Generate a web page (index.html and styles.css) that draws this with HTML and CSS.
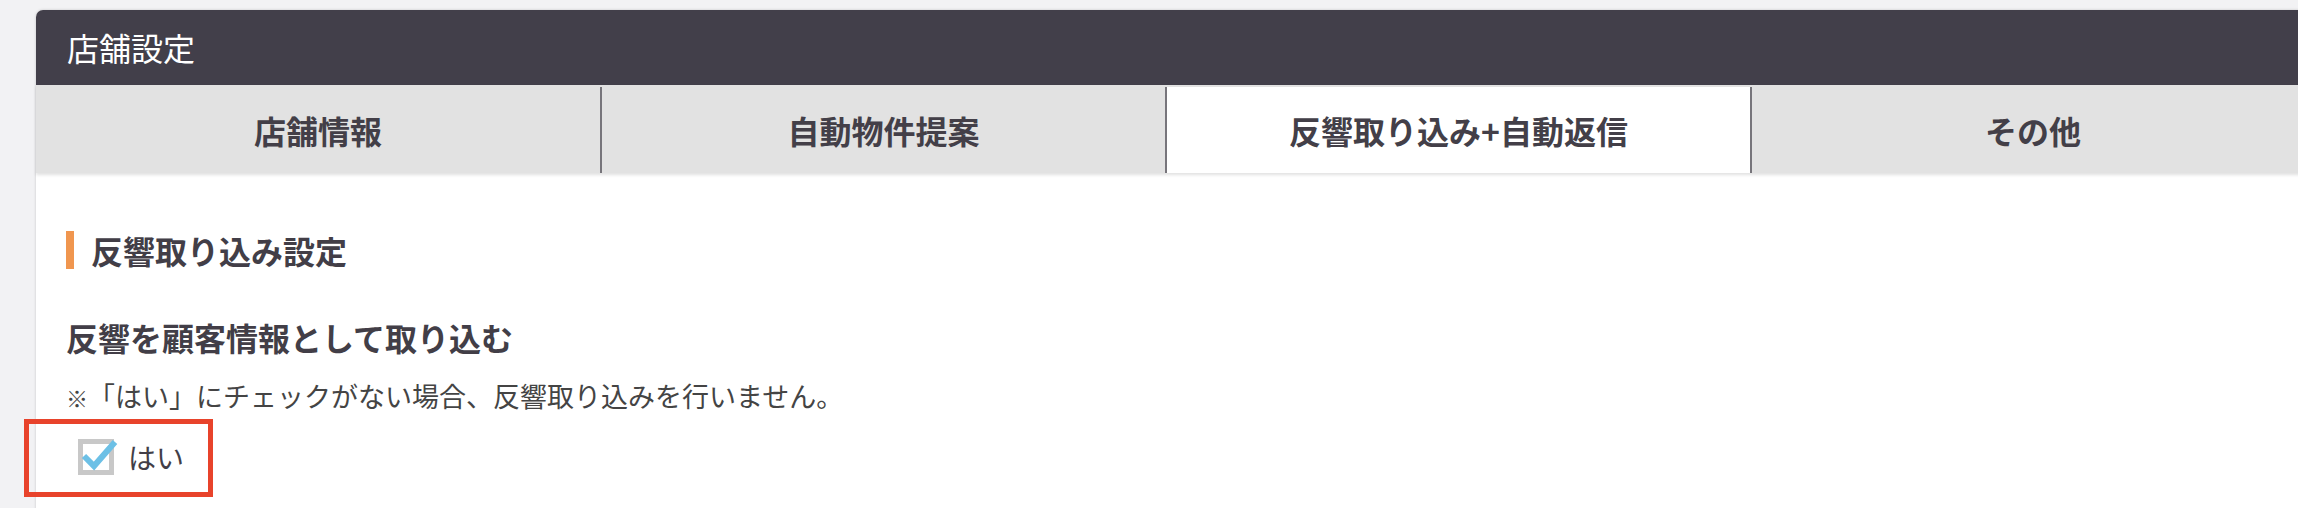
FILE: index.html
```html
<!DOCTYPE html>
<html lang="ja">
<head>
	<meta charset="UTF-8">
	<title>店舗設定</title>
	<link rel="stylesheet" href="styles.css">
</head>
<body>

<div class="panel">
	<div class="panel-title">店舗設定</div>
	<div class="tabs">
		<div class="tab">店舗情報</div>
		<div class="tab">自動物件提案</div>
		<div class="tab active">反響取り込み+自動返信</div>
		<div class="tab">その他</div>
	</div>
	<div class="panel-body">
		<h2 class="section-title">反響取り込み設定</h2>
		<div class="field-label">反響を顧客情報として取り込む</div>
		<p class="note"><span class="mark">※</span>「はい」にチェックがない場合、反響取り込みを行いません。</p>
		<label class="check">
			<svg class="check-box" width="40" height="36" viewBox="0 0 40 36">
				<rect x="2.5" y="2.5" width="31" height="31" fill="#fff" stroke="#c8c8c8" stroke-width="5" />
				<polyline points="6,17 16,27 37,3" fill="none" stroke="#6cc0e6" stroke-width="6" />
			</svg>
			<span>はい</span>
		</label>
	</div>
</div>

<!-- annotation frame drawn over the screenshot -->
<div class="highlight"></div>

</body>
</html>
```

FILE: styles.css
```css
body {
	margin: 0;
	background-color: #f2f2f4;
	font-family: "Noto Sans CJK JP", "Noto Sans", sans-serif;
	color: #423e47;
	overflow: hidden;
	position: relative;
	height: 508px;
}

.panel {
	width: 2278px;
	margin: 10px 0 0 36px;
	background-color: #fff;
	border-radius: 7px 7px 0 0;
	box-shadow: 0 0 3px rgba(0,0,0,.18);
	height: 600px;
}

.panel-title {
	height: 75px;
	line-height: 75px;
	padding-left: 31px;
	background-color: #423f4a;
	color: #fff;
	font-size: 32px;
	border-radius: 7px 7px 0 0;
}

.tabs {
	display: grid;
	grid-template-columns: 564px 565px 585px 1fr;
	padding-top: 2px;
	background-color: #e2e2e2;
	box-shadow: 0 2px 3px rgba(0,0,0,.12);
	position: relative;
}
.tab {
	height: 86px;
	line-height: 86px;
	text-align: center;
	font-size: 32px;
	font-weight: bold;
	color: #433f48;
	background-color: #e2e2e2;
}
.tab + .tab {
	border-left: 2px solid #77757b;
}
.tab.active {
	background-color: #fff;
}

.panel-body {
	padding: 58px 30px 0;
}

.section-title {
	margin: 0;
	height: 38px;
	line-height: 38px;
	padding-left: 17px;
	border-left: 8px solid #f0964f;
	font-size: 32px;
	font-weight: bold;
}

.field-label {
	margin-top: 44px;
	line-height: 48px;
	font-size: 32px;
	font-weight: bold;
}

.note {
	margin: 14px 0 0;
	line-height: 42px;
	font-size: 27px;
	color: #444;
}
.note .mark {
	font-size: 22px;
	font-weight: bold;
}

.check {
	display: flex;
	align-items: center;
	gap: 10px;
	margin-top: 21px;
	padding-left: 12px;
	height: 36px;
	font-size: 28px;
	color: #423e47;
}
.check-box {
	display: block;
	overflow: visible;
}

.highlight {
	position: absolute;
	left: 24px;
	top: 419px;
	width: 179px;
	height: 68px;
	border: 5px solid #e8432b;
}
```
